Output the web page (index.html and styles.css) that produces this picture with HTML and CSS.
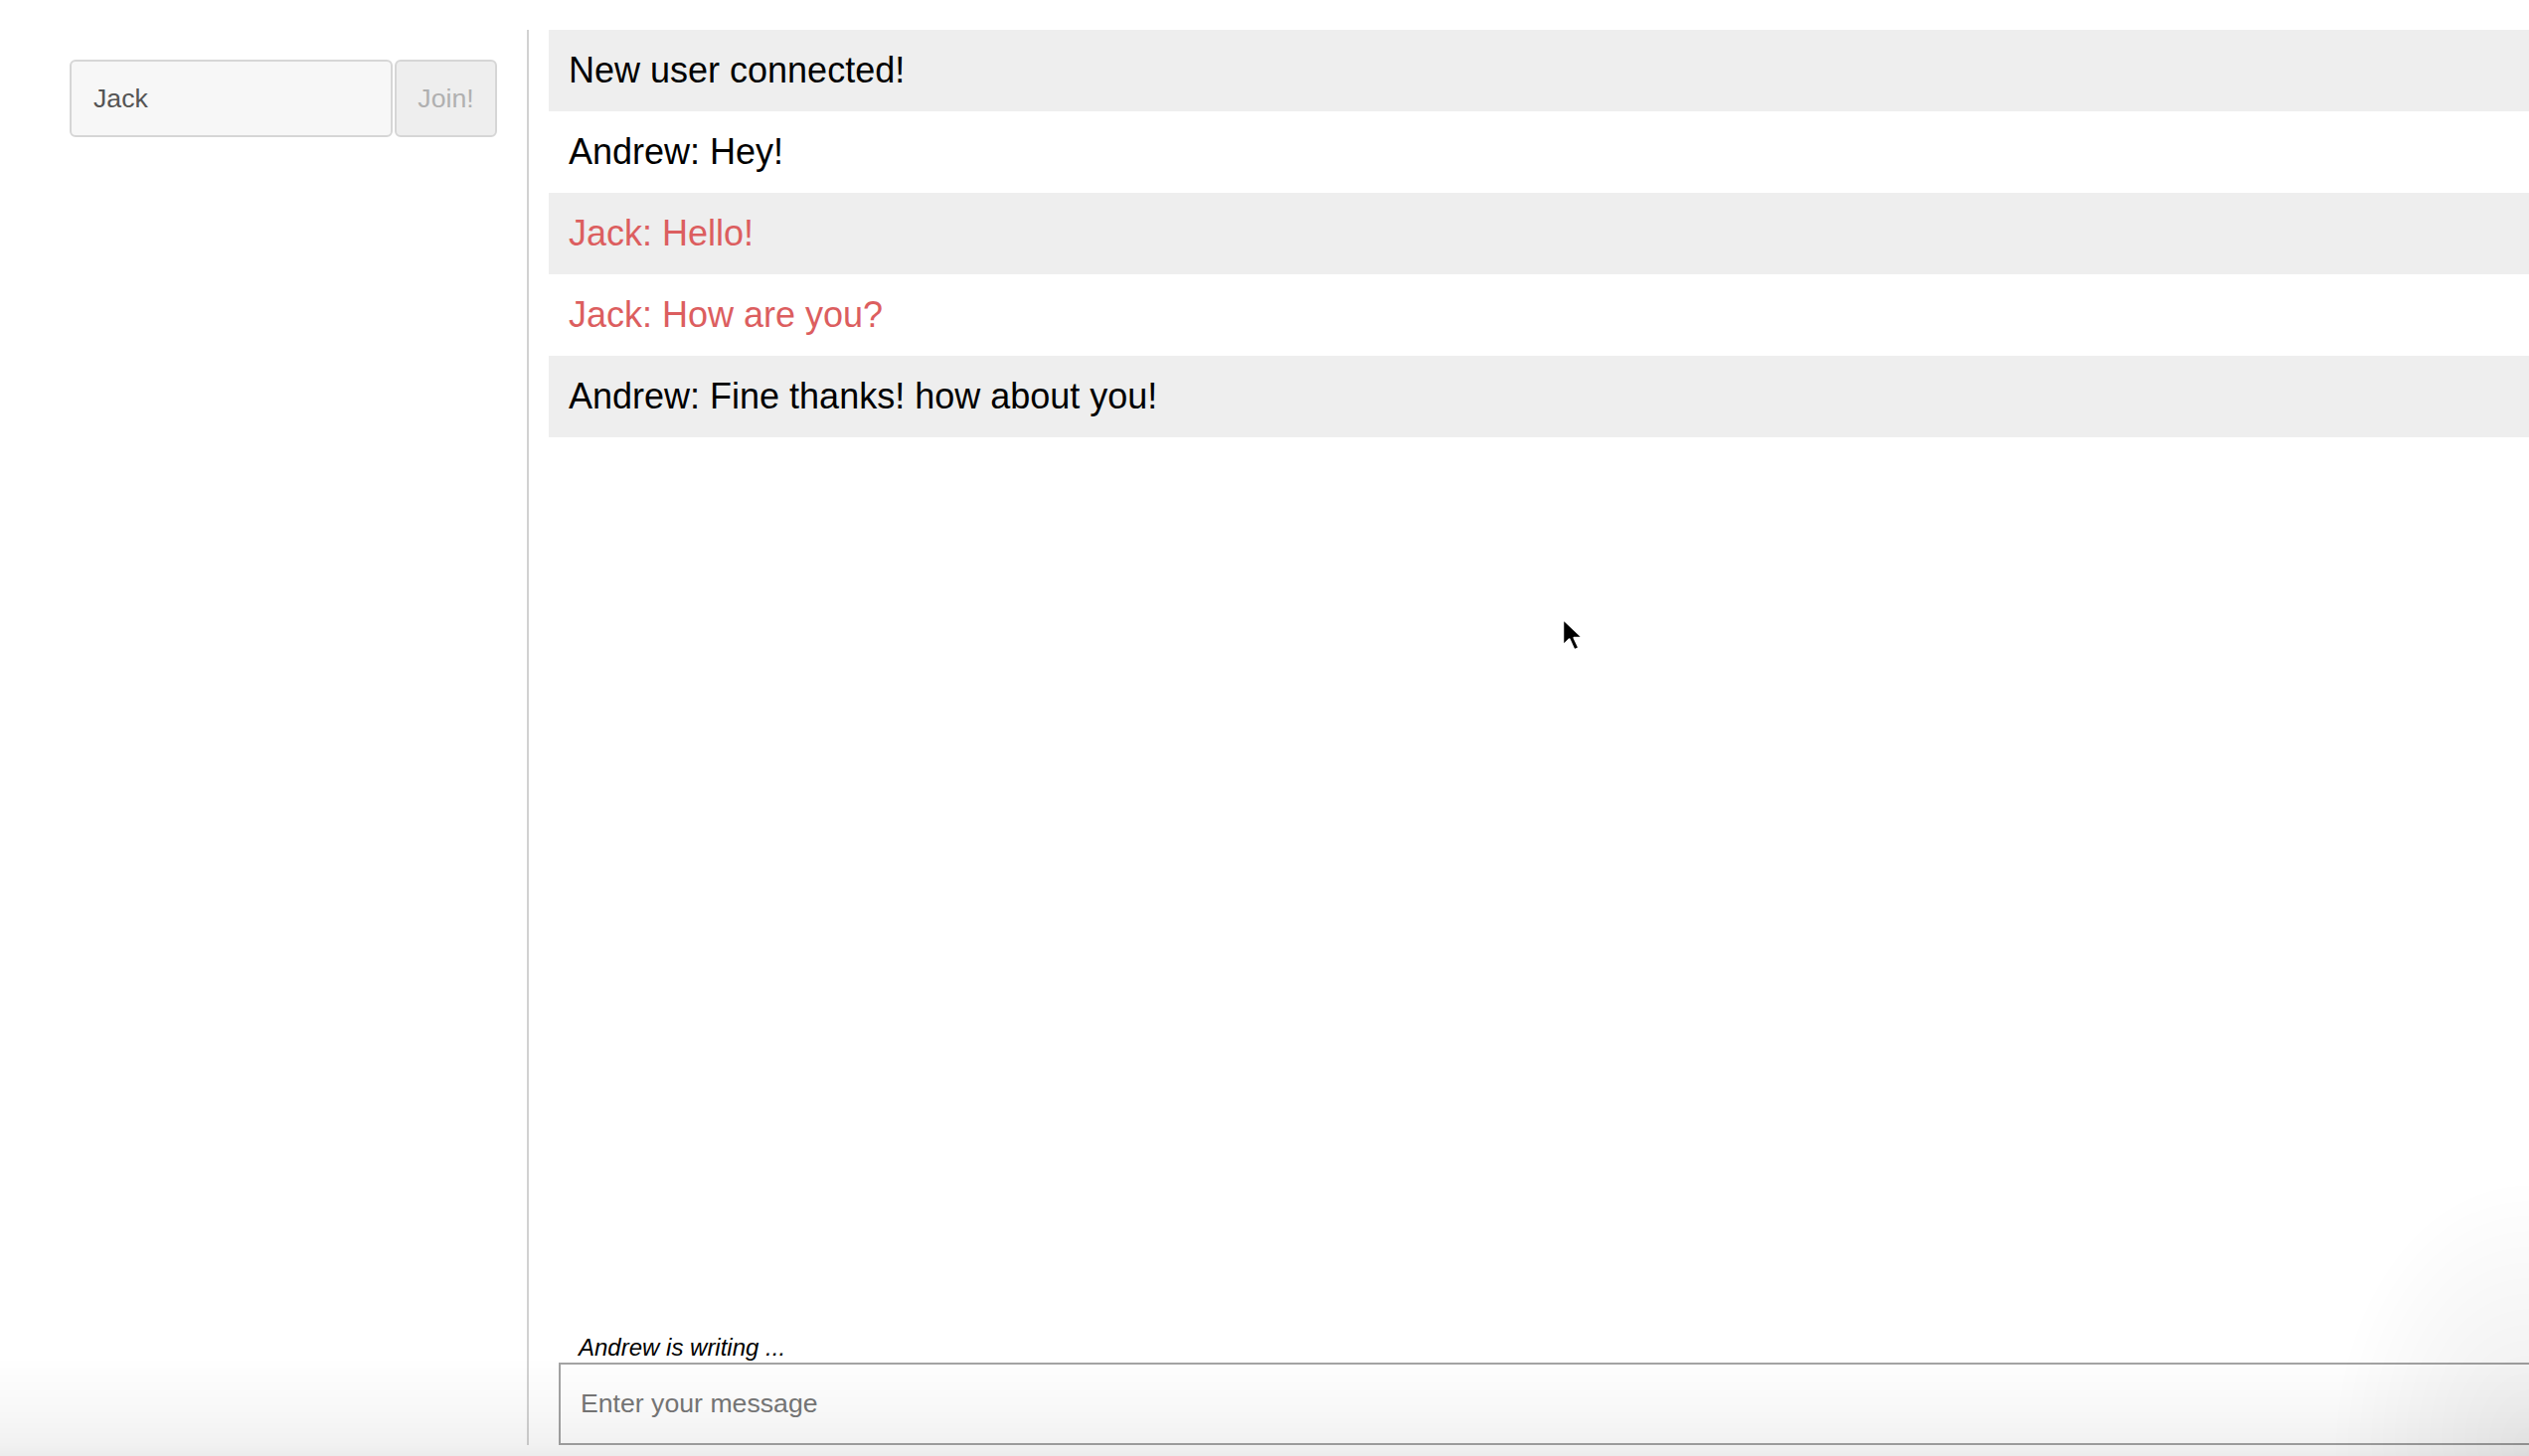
FILE: index.html
```html
<!DOCTYPE html>
<html lang="en">
<head>
    <meta charset="UTF-8">
    <meta name="viewport" content="width=device-width, initial-scale=1.0">
    <title>Chat</title>
    <link rel="stylesheet" href="styles.css">
</head>
<body>
    <div class="app">
        <aside class="sidebar">
            <form class="join-form">
                <input class="name-input" type="text" value="Jack">
                <button class="join-button" type="button" disabled>Join!</button>
            </form>
        </aside>

        <main class="chat">
            <ul class="messages">
                <li class="message">New user connected!</li>
                <li class="message">Andrew: Hey!</li>
                <li class="message own">Jack: Hello!</li>
                <li class="message own">Jack: How are you?</li>
                <li class="message">Andrew: Fine thanks! how about you!</li>
            </ul>

            <div class="composer">
                <div class="typing">Andrew is writing ...</div>
                <input class="message-input" type="text" placeholder="Enter your message">
            </div>
        </main>
    </div>

    <!-- mouse pointer over the chat -->
    <svg class="cursor" width="26" height="38" viewBox="0 0 24 34">
        <path d="M2 2 L2 27 L8 21 L12.5 31 L17 29 L12.5 19.5 L20.5 19.5 Z" fill="#000" stroke="#fff" stroke-width="2" stroke-linejoin="round"/>
    </svg>

    <div class="shade"></div>
</body>
</html>
```

FILE: styles.css
```css
* {
    margin: 0;
    padding: 0;
    box-sizing: border-box;
}

body {
    font-family: "Liberation Sans", Arial, sans-serif;
    background: #fff;
    color: #000;
    padding-top: 30px;
    height: 100vh;
    overflow: hidden;
}

.app {
    display: flex;
    height: calc(100vh - 41px);
}

.sidebar {
    width: 532px;
    flex-shrink: 0;
    padding: 30px 30px 0 70px;
    border-right: 2px solid #d2d2d2;
}

.join-form {
    display: flex;
    gap: 2px;
}

.name-input {
    width: 325px;
    height: 78px;
    padding: 0 22px;
    font-family: inherit;
    font-size: 26.67px;
    color: #555;
    background: #f7f7f7;
    border: 2px solid #d6d6d6;
    border-radius: 6px;
    outline: none;
}

.join-button {
    width: 103px;
    height: 78px;
    font-family: inherit;
    font-size: 26.67px;
    color: #b0b0b0;
    background: #eee;
    border: 2px solid #d6d6d6;
    border-radius: 6px;
}

.chat {
    flex: 1;
    display: flex;
    flex-direction: column;
    justify-content: space-between;
    padding-left: 20px;
    overflow: hidden;
}

.messages {
    list-style: none;
}

.message {
    font-size: 36px;
    padding: 20px 20px;
    height: 82px;
}

.message:nth-child(odd) {
    background: #eee;
}

.message.own {
    color: #dc5e5f;
}

.composer {
    padding-left: 10px;
}

.typing {
    font-size: 24px;
    font-style: italic;
    line-height: 30px;
    padding-left: 20px;
}

.message-input {
    width: 110%;
    height: 83px;
    padding: 0 20px;
    font-family: inherit;
    font-size: 26.67px;
    border: 2px solid #a4a4a4;
    background: transparent;
    outline: none;
}

.message-input::placeholder {
    color: #777;
}

.cursor {
    position: absolute;
    left: 1570px;
    top: 620px;
}

.shade {
    position: fixed;
    left: 0;
    right: 0;
    bottom: 0;
    height: 280px;
    pointer-events: none;
    background:
        radial-gradient(ellipse 200px 280px at 100% 100%, rgba(0, 0, 0, 0.07), rgba(0, 0, 0, 0)),
        linear-gradient(to bottom, rgba(0, 0, 0, 0) 0%, rgba(0, 0, 0, 0.03) 60%, rgba(0, 0, 0, 0.055) 89%, rgba(0, 0, 0, 0.075) 100%) bottom / 100% 100px no-repeat;
}
```
